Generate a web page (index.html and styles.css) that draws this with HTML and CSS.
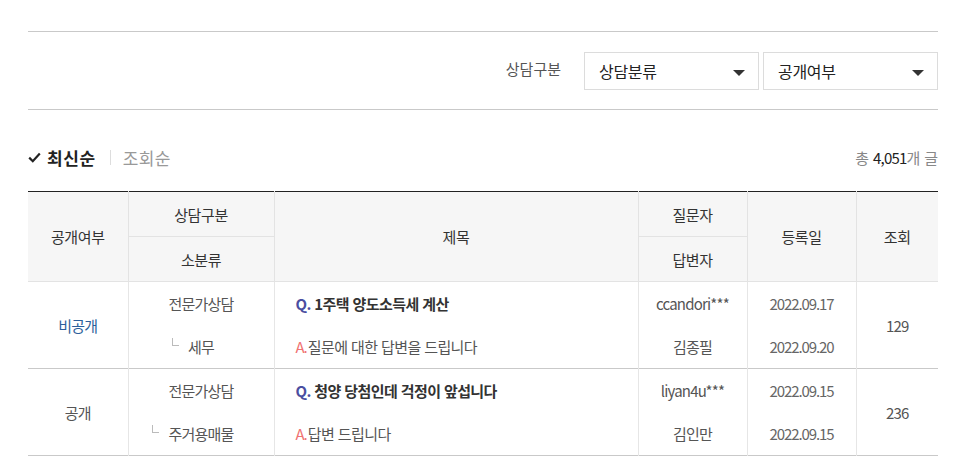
FILE: index.html
```html
<!DOCTYPE html>
<html lang="ko">
<head>
<meta charset="utf-8">
<title>상담 게시판</title>
<link rel="stylesheet" href="styles.css">
</head>
<body>
<div class="board">
  <div class="filter">
    <span class="filter-label">상담구분</span>
    <div class="select select-cat">상담분류<span class="arrow"></span></div>
    <div class="select select-open">공개여부<span class="arrow"></span></div>
  </div>

  <div class="toolbar">
    <div class="sort">
      <span class="sort-item active"><svg class="check" width="13" height="11" viewBox="0 0 13 11"><path d="M1.2 5.6 L4.8 9.2 L11.8 1.6" fill="none" stroke="#222" stroke-width="2.2"/></svg>최신순</span>
      <span class="sort-sep"></span>
      <span class="sort-item">조회순</span>
    </div>
    <div class="count">총 <b>4,051</b>개 글</div>
  </div>

  <table class="list">
    <colgroup>
      <col class="c1"><col class="c2"><col class="c3"><col class="c4"><col class="c5"><col class="c6">
    </colgroup>
    <thead>
      <tr>
        <th rowspan="2">공개여부</th>
        <th>상담구분</th>
        <th rowspan="2">제목</th>
        <th>질문자</th>
        <th rowspan="2">등록일</th>
        <th rowspan="2">조회</th>
      </tr>
      <tr>
        <th>소분류</th>
        <th>답변자</th>
      </tr>
    </thead>
    <tbody>
      <tr class="q">
        <td rowspan="2" class="private">비공개</td>
        <td>전문가상담</td>
        <td class="title"><span class="qmark">Q.</span> 1주택 양도소득세 계산</td>
        <td>ccandori***</td>
        <td class="date">2022.09.17</td>
        <td rowspan="2" class="num">129</td>
      </tr>
      <tr class="a">
        <td><span class="sub">세무</span></td>
        <td class="answer"><span class="amark">A.</span>질문에 대한 답변을 드립니다</td>
        <td>김종필</td>
        <td class="date">2022.09.20</td>
      </tr>
      <tr class="q">
        <td rowspan="2">공개</td>
        <td>전문가상담</td>
        <td class="title"><span class="qmark">Q.</span> 청양 당첨인데 걱정이 앞섭니다</td>
        <td>liyan4u***</td>
        <td class="date">2022.09.15</td>
        <td rowspan="2" class="num">236</td>
      </tr>
      <tr class="a">
        <td><span class="sub">주거용매물</span></td>
        <td class="answer"><span class="amark">A.</span>답변 드립니다</td>
        <td>김인만</td>
        <td class="date">2022.09.15</td>
      </tr>
    </tbody>
  </table>
</div>
</body>
</html>
```

FILE: styles.css
```css
* { box-sizing: border-box; }
html, body { margin: 0; padding: 0; background: #fff; }
body {
  font-family: "Noto Sans CJK KR", "Noto Sans", sans-serif;
  color: #333;
  letter-spacing: -0.6px;
}
.board {
  width: 910px;
  margin: 31px 0 0 28px;
}
.filter {
  border-top: 1px solid #c9c9c9;
  border-bottom: 1px solid #c9c9c9;
  padding: 20px 0 19px;
  display: flex;
  justify-content: flex-end;
  align-items: center;
}
.filter-label {
  font-size: 15px;
  color: #555;
  letter-spacing: 0;
  margin-right: 23px;
  position: relative;
  top: -3px;
}
.select {
  position: relative;
  width: 175px;
  height: 38px;
  border: 1px solid #dcdcdc;
  font-size: 16px;
  letter-spacing: -0.3px;
  color: #222;
  padding-left: 14px;
  display: flex;
  align-items: center;
}
.select + .select { margin-left: 4px; }
.arrow {
  position: absolute;
  right: 13px;
  top: 17px;
  width: 0;
  height: 0;
  border-left: 6px solid transparent;
  border-right: 6px solid transparent;
  border-top: 6px solid #333;
}
.toolbar {
  display: flex;
  justify-content: space-between;
  align-items: center;
  height: 81px;
  padding-top: 13px;
}
.sort { display: flex; align-items: center; }
.sort-item {
  font-size: 17px;
  letter-spacing: 0.4px;
  color: #999;
  display: flex;
  align-items: center;
}
.sort-item.active { color: #222; font-weight: 700; letter-spacing: 0.6px; }
.check { margin-right: 6px; margin-top: 1px; }
.sort-sep {
  width: 1px;
  height: 15px;
  background: #ddd;
  margin: 0 12px 0 14px;
}
.count {
  font-size: 15px;
  letter-spacing: -0.1px;
  color: #888;
}
.count b { font-weight: 400; color: #222; letter-spacing: -0.8px; }
.list {
  width: 910px;
  table-layout: fixed;
  border-collapse: collapse;
  border-top: 1px solid #222;
}
.list tbody { border-bottom: 1px solid #c9c9c9; }
.c1 { width: 100px; }
.c2 { width: 146px; }
.c3 { width: 364px; }
.c4 { width: 109px; }
.c5 { width: 109px; }
.c6 { width: 82px; }
.list th {
  background: #f6f6f6;
  font-weight: 400;
  font-size: 15px;
  letter-spacing: -0.4px;
  color: #333;
  height: 45px;
  border: 1px solid #e3e3e3;
  padding: 0;
  text-align: center;
}
.list tr th:first-child { border-left: 0; }
.list tr th:last-child { border-right: 0; }
.list thead tr:first-child th { border-top: 0; }
.list td {
  font-size: 15px;
  color: #555;
  text-align: center;
  padding: 0;
  height: 44px;
  letter-spacing: -0.8px;
  border-left: 1px solid #e6e6e6;
  border-right: 1px solid #e6e6e6;
}
.list tr td:first-child[rowspan] { border-left: 0; }
.list td.num { border-right: 0; }
.list tr.q td { border-top: 1px solid #c9c9c9; }
.list thead + tbody tr.q:first-child td { border-top: 1px solid #e6e6e6; }
.list tr.a td { height: 43px; padding-bottom: 1px; }
.list td.private { color: #2c5f9a; }
.list td.date { color: #666; letter-spacing: -1.1px; }
.list td.title {
  text-align: left;
  padding-left: 21px;
  font-weight: 700;
  letter-spacing: -0.6px;
  color: #333;
}
.qmark { color: #4b4ea0; }
.list td.answer {
  text-align: left;
  padding-left: 21px;
  letter-spacing: -0.6px;
  color: #555;
}
.amark { color: #f07272; letter-spacing: -1px; margin-right: 1px; }
.sub { position: relative; }
.sub::before {
  content: "";
  position: absolute;
  left: -16px;
  top: 2px;
  width: 6px;
  height: 7px;
  border-left: 1px solid #bbb;
  border-bottom: 1px solid #bbb;
}
```
